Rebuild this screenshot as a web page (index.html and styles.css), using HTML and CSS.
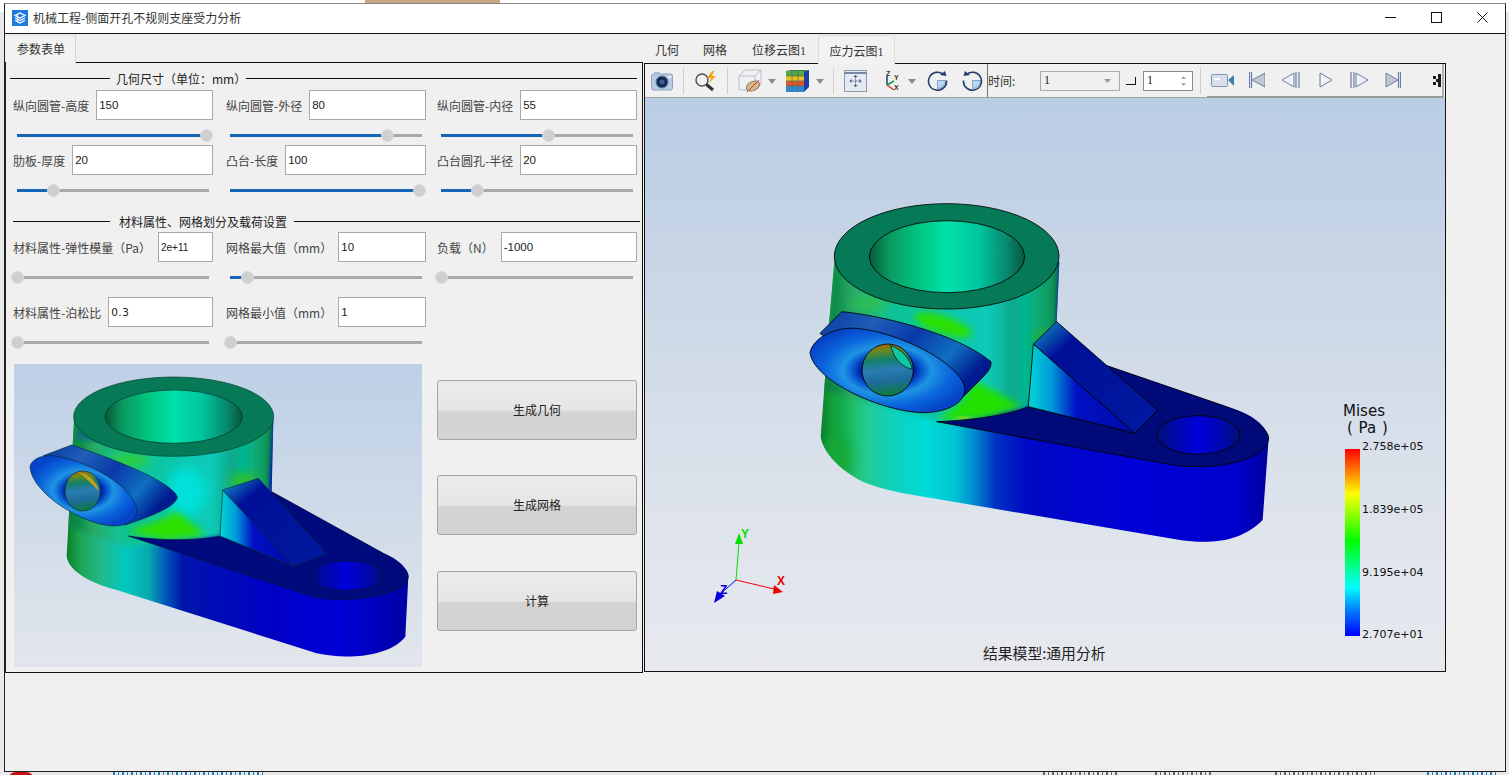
FILE: index.html
```html
<!DOCTYPE html>
<html lang="zh-CN">
<head>
<meta charset="utf-8">
<title>机械工程-侧面开孔不规则支座受力分析</title>
<link rel="stylesheet" href="styles.css">
</head>
<body>
<div class="behind">
  <span class="bg-tan"></span>
  <span class="bg-red"></span>
  <span class="bg-frag f1"></span>
  <span class="bg-frag f2"></span>
  <span class="bg-frag f3"></span>
  <span class="bg-frag f4"></span>
  <span class="bg-frag f5"></span>
</div>

<svg class="defs" width="0" height="0" aria-hidden="true">
  <defs>
    <linearGradient id="frontBig">
      <stop offset="0" stop-color="#0b7f2e"/><stop offset=".02" stop-color="#129a36"/><stop offset=".05" stop-color="#14ad4c"/>
      <stop offset=".075" stop-color="#1fbf6d"/><stop offset=".105" stop-color="#23cb95"/><stop offset=".16" stop-color="#10d0bb"/>
      <stop offset=".235" stop-color="#00dbd8"/><stop offset=".3" stop-color="#00c4d2"/><stop offset=".345" stop-color="#0086d0"/>
      <stop offset=".39" stop-color="#0032c2"/><stop offset=".46" stop-color="#0008c4"/><stop offset=".7" stop-color="#0000d6"/>
      <stop offset=".93" stop-color="#0000cc"/><stop offset="1" stop-color="#00009c"/>
    </linearGradient>
    <linearGradient id="frontSmall">
      <stop offset="0" stop-color="#0a7f25"/><stop offset=".04" stop-color="#1ca556"/><stop offset=".1" stop-color="#22b88a"/>
      <stop offset=".17" stop-color="#02c8c0"/><stop offset=".24" stop-color="#08a8b0"/><stop offset=".29" stop-color="#0058b8"/>
      <stop offset=".34" stop-color="#0014ac"/><stop offset=".6" stop-color="#0000c4"/><stop offset=".8" stop-color="#0000d8"/>
      <stop offset="1" stop-color="#0000a4"/>
    </linearGradient>
    <linearGradient id="upperBody">
      <stop offset="0" stop-color="#0a7a42"/><stop offset=".06" stop-color="#0f8f4c"/><stop offset=".12" stop-color="#2aa864"/><stop offset=".24" stop-color="#12c090"/>
      <stop offset=".48" stop-color="#0cc6a8"/><stop offset=".7" stop-color="#0ccab8"/><stop offset=".8" stop-color="#0aa88c"/><stop offset=".86" stop-color="#04b890"/>
      <stop offset=".96" stop-color="#0f9a5c"/><stop offset="1" stop-color="#0a7a42"/>
    </linearGradient>
    <linearGradient id="holeTop">
      <stop offset="0" stop-color="#07583c"/><stop offset=".13" stop-color="#0a9a60"/><stop offset=".33" stop-color="#00c884"/>
      <stop offset=".5" stop-color="#00e0aa"/><stop offset=".7" stop-color="#00c8a0"/><stop offset=".88" stop-color="#088a70"/>
      <stop offset="1" stop-color="#06583f"/>
    </linearGradient>
    <linearGradient id="ribSide">
      <stop offset="0" stop-color="#00d8d4"/><stop offset=".22" stop-color="#0098d8"/><stop offset=".45" stop-color="#0010c4"/>
      <stop offset="1" stop-color="#000aa8"/>
    </linearGradient>
    <linearGradient id="ribSlope" x1="0" y1="0" x2="1" y2="1">
      <stop offset="0" stop-color="#08c8cc"/><stop offset=".1" stop-color="#0a64b4"/><stop offset=".24" stop-color="#000f98"/>
      <stop offset="1" stop-color="#001aa0"/>
    </linearGradient>
    <linearGradient id="armHole">
      <stop offset="0" stop-color="#00106e"/><stop offset=".2" stop-color="#0008a8"/><stop offset=".5" stop-color="#0000da"/>
      <stop offset=".82" stop-color="#0008a8"/><stop offset="1" stop-color="#00106e"/>
    </linearGradient>
    <linearGradient id="bossSide" x1="0" y1="0" x2="1" y2=".5">
      <stop offset="0" stop-color="#063a9e"/><stop offset=".3" stop-color="#1f5eb8"/><stop offset=".55" stop-color="#0a3aa8"/>
      <stop offset=".8" stop-color="#0f6fc0"/><stop offset="1" stop-color="#001a90"/>
    </linearGradient>
    <radialGradient id="bossFace" cx=".5" cy=".5" r=".55">
      <stop offset=".3" stop-color="#00189c"/><stop offset=".42" stop-color="#0a62d4"/><stop offset=".52" stop-color="#1f94e4"/>
      <stop offset=".74" stop-color="#0a66dc"/><stop offset="1" stop-color="#0544c8"/>
    </radialGradient>
    <linearGradient id="boreHole" x1=".4" y1="0" x2=".5" y2="1">
      <stop offset="0" stop-color="#a8600f"/><stop offset=".12" stop-color="#6b8a1c"/><stop offset=".3" stop-color="#14806c"/>
      <stop offset=".5" stop-color="#2a7cb2"/><stop offset=".72" stop-color="#1e6c9c"/><stop offset="1" stop-color="#0c7c3a"/>
    </linearGradient>
    <filter id="soft" x="-40%" y="-40%" width="180%" height="180%"><feGaussianBlur stdDeviation="16"/></filter>
    <filter id="mid" x="-40%" y="-40%" width="180%" height="180%"><feGaussianBlur stdDeviation="11"/></filter>
    <filter id="softer" x="-40%" y="-40%" width="180%" height="180%"><feGaussianBlur stdDeviation="7"/></filter>
    <clipPath id="bigBody"><path d="M163 215L148 390L122 740C130 790 190 850 260 880C300 895 340 905 400 915L1200 1050C1280 1062 1380 1060 1448 990L1466 745C1460 700 1400 665 1340 650L975 525L830 395L838 215Z"/></clipPath>
    <clipPath id="smallBody"><path d="M222 180L200 590C210 640 280 670 350 690L950 880C1040 900 1170 890 1216 830L1225 650C1225 620 1180 590 1150 580L815 395L820 180Z"/></clipPath>
  </defs>
</svg>

<main class="window">
  <header class="titlebar">
    <svg class="app-icon" viewBox="0 0 16 16"><rect width="16" height="16" fill="#1f7ae0"/><path d="M3 5.500 8 3l5 2.500L8 8zM3 8l5 2.500L13 8M3 10.500 8 13l5-2.500" fill="none" stroke="#fff" stroke-width="1.300"/><path d="M5.500 4.500v7" stroke="#fff" stroke-width="1.200"/></svg>
    <span class="title">机械工程-侧面开孔不规则支座受力分析</span>
    <div class="win-controls">
      <svg class="win-btn" viewBox="0 0 11 11"><path d="M0 5.500h11" stroke="#111"/></svg>
      <svg class="win-btn max" viewBox="0 0 11 11"><rect x=".5" y=".5" width="10" height="10" fill="none" stroke="#111"/></svg>
      <svg class="win-btn close" viewBox="0 0 11 11"><path d="M.5.500l10 10M10.500.500l-10 10" stroke="#111" fill="none"/></svg>
    </div>
  </header>

  <div class="client">
    <section class="left">
      <div class="left-tabs"><span class="left-tab">参数表单</span></div>
      <div class="form-panel">
        <div class="heading h1"><i class="rule r1"></i><span>几何尺寸（单位：mm）</span><i class="rule grow"></i></div>
        <div class="grid g1">
          <div class="cell"><div class="field"><label>纵向圆管-高度</label><input value="150"></div><div class="slider"><b style="width:98.500%"></b><u style="left:98.500%"></u></div></div>
          <div class="cell"><div class="field"><label>纵向圆管-外径</label><input value="80"></div><div class="slider"><b style="width:82%"></b><u style="left:82%"></u></div></div>
          <div class="cell"><div class="field"><label>纵向圆管-内径</label><input value="55"></div><div class="slider"><b style="width:56%"></b><u style="left:56%"></u></div></div>
          <div class="cell"><div class="field"><label>肋板-厚度</label><input value="20"></div><div class="slider"><b style="width:19%"></b><u style="left:19%"></u></div></div>
          <div class="cell"><div class="field"><label>凸台-长度</label><input value="100"></div><div class="slider"><b style="width:98.500%"></b><u style="left:98.500%"></u></div></div>
          <div class="cell"><div class="field"><label>凸台圆孔-半径</label><input value="20"></div><div class="slider"><b style="width:19%"></b><u style="left:19%"></u></div></div>
        </div>
        <div class="heading h2"><i class="rule r2"></i><span>材料属性、网格划分及载荷设置</span><i class="rule grow"></i></div>
        <div class="grid g2">
          <div class="cell"><div class="field"><label>材料属性-弹性模量（Pa）</label><input class="narrow" value="2e+11"></div><div class="slider"><u style="left:.5%"></u></div></div>
          <div class="cell"><div class="field tight"><label>网格最大值（mm）</label><input value="10"></div><div class="slider"><b style="width:9%"></b><u style="left:9%"></u></div></div>
          <div class="cell"><div class="field"><label>负载（N）</label><input value="-1000"></div><div class="slider"><u style="left:.5%"></u></div></div>
          <div class="cell"><div class="field"><label>材料属性-泊松比</label><input class="mono" value="0.3"></div><div class="slider"><u style="left:.5%"></u></div></div>
          <div class="cell"><div class="field tight"><label>网格最小值（mm）</label><input value="1"></div><div class="slider"><u style="left:.5%"></u></div></div>
        </div>
        <div class="bottom">
          <div class="preview">
            <svg class="model-small" viewBox="0 0 1224 909">
              <g transform="translate(-42 -12)">
                <path d="M222 180L200 590C210 640 280 670 350 690L950 880C1040 900 1170 890 1216 830L1225 650C1225 620 1180 590 1150 580L815 395L820 180Z" fill="url(#frontSmall)"/>
                <g clip-path="url(#smallBody)">
                  <path d="M222 180L205 500L380 560L660 530L808 400L820 180Z" fill="url(#upperBody)" filter="url(#softer)"/>
                  <ellipse cx="560" cy="395" rx="60" ry="75" fill="#00e0d8" filter="url(#soft)"/>
                  <path d="M380 515L480 480L530 455L620 525L500 540Z" fill="#2ee000" filter="url(#mid)"/>
                  <ellipse cx="390" cy="300" rx="60" ry="20" fill="#30d030" filter="url(#soft)"/>
                  <ellipse cx="730" cy="365" rx="45" ry="24" fill="#30c020" filter="url(#soft)"/>
                  <ellipse cx="280" cy="225" rx="55" ry="18" fill="#0b6f80" filter="url(#softer)"/>
                </g>
                <path d="M815 395L1150 580C1200 610 1225 630 1225 650C1220 700 1090 720 1010 718C980 718 960 715 940 710L385 528C500 545 600 540 660 528L880 618L980 582Z" fill="#000a7c" stroke="#031436" stroke-width="2"/>
                <path d="M668 390L660 528L880 618Z" fill="url(#ribSide)" stroke="#063040" stroke-width="2"/>
                <path d="M668 390L775 355L980 582L880 618Z" fill="url(#ribSlope)" stroke="#06254a" stroke-width="2"/>
                <ellipse cx="1040" cy="647" rx="112" ry="44" fill="url(#armHole)" stroke="#001040" stroke-width="2"/>
                <path d="M130 287L215 255C320 290 510 360 532 410C530 440 450 470 375 495L200 400Z" fill="url(#bossSide)" stroke="#052a40" stroke-width="2"/>
                <path d="M90 320C95 295 130 283 165 288C260 300 400 380 410 445C415 480 380 498 340 498C250 495 95 400 90 320Z" fill="url(#bossFace)" stroke="#052a40" stroke-width="2"/>
                <ellipse cx="248" cy="393" rx="53" ry="60" fill="url(#boreHole)" stroke="#06302a" stroke-width="2"/>
                <path d="M232 336C262 340 290 362 296 392L248 345Z" fill="#c9a214"/>
                <ellipse cx="521" cy="170" rx="300" ry="119" fill="#067a56" stroke="#063a2c" stroke-width="2"/>
                <ellipse cx="521" cy="170" rx="206" ry="80" fill="url(#holeTop)" stroke="#052e22" stroke-width="2"/>
              </g>
            </svg>
          </div>
          <div class="actions">
            <button>生成几何</button>
            <button>生成网格</button>
            <button>计算</button>
          </div>
        </div>
      </div>
    </section>

    <section class="right">
      <nav class="right-tabs">
        <span class="tab">几何</span>
        <span class="tab">网格</span>
        <span class="tab">位移云图1</span>
        <span class="tab active">应力云图1</span>
      </nav>
      <div class="viewer">
        <div class="toolbars">
          <div class="toolbar-a">
            <svg class="ic ml6" width="22" height="20" viewBox="0 0 22 20"><rect x=".5" y="3" width="21" height="16" rx="2" fill="#b9cbe4" stroke="#8ea3c4"/><rect x="3" y="1" width="6" height="3" fill="#a8bcd8"/><circle cx="11" cy="11" r="6" fill="#16294f" stroke="#5f7aa8"/><circle cx="11" cy="11" r="2.500" fill="#3b5f9e"/><rect x="17" y="5" width="3" height="2" fill="#eef3fa"/></svg>
            <i class="sep ml10"></i>
            <svg class="ic ml10" width="24" height="22" viewBox="0 0 24 22"><circle cx="8" cy="10" r="6" fill="#eef2f7" stroke="#555" stroke-width="1.500"/><path d="M12.500 14.500 19 20" stroke="#333" stroke-width="3"/><path d="M18 1l-5 7h4l-2 5 7-7h-4l2-5z" fill="#f3a51f"/></svg>
            <i class="sep ml9"></i>
            <svg class="ic ml10" width="24" height="24" viewBox="0 0 24 24"><path d="M1 7 7 1h16v14l-6 6H1z" fill="#eef0f3" stroke="#b9bfc7"/><path d="M1 7h16v14M17 7l6-6" fill="none" stroke="#b9bfc7"/><ellipse cx="15" cy="17" rx="7" ry="4.500" fill="#d5b68b" stroke="#8a7a6a" transform="rotate(-25 15 17)"/><path d="M9 23 21 11" stroke="#c2452d"/></svg>
            <svg class="ic ml6 dd" width="8" height="5" viewBox="0 0 8 5"><path d="M0 0h8L4 5z" fill="#8a8a8a"/></svg>
            <svg class="ic ml10" width="23" height="22" viewBox="0 0 23 22"><path d="M18 1l5-1v17l-5 5z" fill="#1c3fa0"/><path d="M0 1 5 0h18l-5 1z" fill="#3a7a40"/><rect y="1" width="18" height="5" fill="#4fa84a"/><rect y="6" width="18" height="5" fill="#e9c020"/><rect y="11" width="18" height="5" fill="#e2542c"/><rect y="16" width="18" height="6" fill="#2f8ad8"/><path d="M6 1v21M12 1v21M0 6h18M0 11h18M0 16h18" stroke="#5a6a50" stroke-width=".7"/></svg>
            <svg class="ic ml7 dd" width="8" height="5" viewBox="0 0 8 5"><path d="M0 0h8L4 5z" fill="#8a8a8a"/></svg>
            <i class="sep ml9"></i>
            <svg class="ic ml10" width="23" height="22" viewBox="0 0 23 22"><rect x=".5" y=".5" width="22" height="21" fill="#e5e9f1" stroke="#8c98ad"/><path d="M.5 3h22" stroke="#7888a5" stroke-width="2"/><path d="M11.500 7v8M7.500 11h8" stroke="#8a93a4"/><path d="M11.500 5l2 2h-4zM11.500 17l2-2h-4zM5.500 11l2-2v4zM17.500 11l-2-2v4z" fill="#2f4a78"/></svg>
            <svg class="ic ml14 triadic" width="19" height="22" viewBox="0 0 19 22"><path d="M6 15V6" stroke="#1c3f7a" stroke-width="1.500"/><path d="M6 15l7-4" stroke="#10985a" stroke-width="1.500"/><path d="M6 15l7 5" stroke="#d8342a" stroke-width="1.500"/><text x="5" y="6" class="axis">Z</text><text x="13" y="10" class="axis">Y</text><text x="13" y="20" class="axis">X</text></svg>
            <svg class="ic ml8 dd" width="8" height="5" viewBox="0 0 8 5"><path d="M0 0h8L4 5z" fill="#8a8a8a"/></svg>
            <svg class="ic ml11" width="21" height="21" viewBox="0 0 21 21"><path d="M10.500 10.500h8a8 8 0 0 1-8 8z" fill="#bcd6f2" stroke="#4a78a8" stroke-width=".6"/><path d="M16.500 4.500a9 9 0 1 0 3 6" fill="none" stroke="#223f6e" stroke-width="1.600"/><path d="M19.500 6 13 5l5-4z" fill="#223f6e"/></svg>
            <svg class="ic ml14" width="21" height="21" viewBox="0 0 21 21"><path d="M10.500 10.500h8a8 8 0 0 1-8 8z" fill="#bcd6f2" stroke="#4a78a8" stroke-width=".6"/><path d="M4.500 4.500a9 9 0 1 1-3 6" fill="none" stroke="#223f6e" stroke-width="1.600"/><path d="M1.500 6 8 5 3 1z" fill="#223f6e"/></svg>
            <i class="sep dark ml4"></i>
            <span class="time-label">时间:</span>
            <div class="combo"><span>1</span><svg width="7" height="4" viewBox="0 0 7 4"><path d="M0 0h7L3.500 4z" fill="#9a9a9a"/></svg></div>
            <i class="corner"></i>
            <div class="spin"><span>1</span><svg width="5" height="12" viewBox="0 0 5 12"><path d="M2.500 1 5 4H0zM2.500 11 0 8h5z" fill="#a8a8a8"/></svg></div>
            <i class="sep ml7"></i>
          </div>
          <div class="toolbar-b">
            <svg class="ic ml4" width="24" height="13" viewBox="0 0 24 13"><rect x=".5" y=".5" width="16" height="12" rx="1" fill="#d8dfea" stroke="#8095b5"/><rect x="3" y="4" width="6" height="2" fill="#fff"/><path d="M17 6l6-5v11z" fill="#3d7fb0"/></svg>
            <svg class="ic ml14" width="16" height="16" viewBox="0 0 16 16"><path d="M.5 0v16M2.500 0v16" stroke="#6a7fa5" stroke-width="1.200"/><path d="M16 1v14L3 8z" fill="#c0c7d2" stroke="#6a7fa5"/></svg>
            <svg class="ic ml16" width="19" height="16" viewBox="0 0 19 16"><path d="M13 1v14L1 8z" fill="#eef1f6" stroke="#6a7fa5"/><path d="M15 0v16M18 0v16" stroke="#6a7fa5" stroke-width="1.200"/></svg>
            <svg class="ic ml19" width="14" height="16" viewBox="0 0 14 16"><path d="M1 1v14l12-7z" fill="#eef1f6" stroke="#6a7fa5"/></svg>
            <svg class="ic ml17" width="18" height="16" viewBox="0 0 18 16"><path d="M1 0v16M4 0v16" stroke="#6a7fa5" stroke-width="1.200"/><path d="M6 1v14l12-7z" fill="#eef1f6" stroke="#6a7fa5"/></svg>
            <svg class="ic ml17" width="16" height="16" viewBox="0 0 16 16"><path d="M1 1v14l12-7z" fill="#c0c7d2" stroke="#6a7fa5"/><path d="M13.500 0v16M15.500 0v16" stroke="#6a7fa5" stroke-width="1.200"/></svg>
            <svg class="ic handle" width="8" height="13" viewBox="0 0 8 13"><path d="M0 2h3v3H0zM0 8h3v3H0zM3 5h2v3H3zM5 0h3v13H5z" fill="#1a1a1a"/></svg>
          </div>
        </div>
        <div class="canvas">
          <svg class="model-big" viewBox="0 0 1500 1110">
            <path d="M163 215L148 390L122 740C130 790 190 850 260 880C300 895 340 905 400 915L1200 1050C1280 1062 1380 1060 1448 990L1466 745C1460 700 1400 665 1340 650L975 525L830 395L838 215Z" fill="url(#frontBig)"/>
            <g clip-path="url(#bigBody)">
              <path d="M163 215L148 400L130 600L460 690L745 655L830 400L838 215Z" fill="url(#upperBody)" filter="url(#softer)"/>
              <ellipse cx="490" cy="405" rx="90" ry="26" fill="#2ae000" filter="url(#mid)" transform="rotate(18 490 405)"/>
              <path d="M470 692L540 640L585 575L640 600L725 650L620 684Z" fill="#22e000" filter="url(#mid)"/>
              <ellipse cx="550" cy="686" rx="30" ry="4" fill="#d8e000" filter="url(#softer)"/>
              <ellipse cx="270" cy="340" rx="50" ry="26" fill="#2fc050" filter="url(#soft)"/>
              <ellipse cx="790" cy="445" rx="30" ry="24" fill="#22b030" filter="url(#soft)"/>
              <ellipse cx="350" cy="290" rx="60" ry="20" fill="#0b7088" filter="url(#soft)"/>
              <ellipse cx="170" cy="800" rx="40" ry="60" fill="#18a838" filter="url(#soft)"/>
            </g>
            <path d="M975 525L1340 650C1420 680 1466 720 1466 745C1460 790 1380 830 1250 830C1220 830 1200 828 1180 825L470 695C600 690 700 670 745 650L1065 730L1133 660Z" fill="#000a78" stroke="#000" stroke-width="2.500"/>
            <path d="M760 462L745 650L1065 730Z" fill="url(#ribSide)" stroke="#000" stroke-width="2.500"/>
            <path d="M760 462L830 395L1133 660L1065 730Z" fill="url(#ribSlope)" stroke="#000" stroke-width="2.500"/>
            <ellipse cx="1255" cy="735" rx="125" ry="58" fill="url(#armHole)" stroke="#000" stroke-width="2.500"/>
            <path d="M120 430L185 365C300 375 530 430 633 515C635 540 620 550 540 630L300 560Z" fill="url(#bossSide)" stroke="#000" stroke-width="2.500"/>
            <path d="M90 488C100 440 170 410 230 415C350 425 550 520 555 600C550 650 480 668 430 668C300 665 100 570 90 488Z" fill="url(#bossFace)" stroke="#000" stroke-width="2.500"/>
            <ellipse cx="323" cy="540" rx="77" ry="78" fill="url(#boreHole)" stroke="#000" stroke-width="2.500"/>
            <path d="M332 467C365 478 390 505 397 538C360 530 340 500 332 467Z" fill="#10c8a0" stroke="#000" stroke-width="2"/>
            <ellipse cx="500" cy="199" rx="337" ry="158" fill="#067a56" stroke="#000" stroke-width="2.500"/>
            <ellipse cx="501" cy="200" rx="233" ry="108" fill="url(#holeTop)" stroke="#000" stroke-width="2.500"/>
          </svg>

          <svg class="triad" viewBox="0 0 120 100">
            <path d="M46 70 49 32" stroke="#00e000" stroke-width="1"/>
            <path d="M49 23 45 34H53z" fill="#00e000"/>
            <path d="M46 70 84 79" stroke="#f00000" stroke-width="1"/>
            <path d="M93 82 84 75 83 84z" fill="#f00000"/>
            <path d="M46 70 28 86" stroke="#0000e0" stroke-width="1"/>
            <path d="M24 93 35 86 27 81z" fill="#0000e0"/>
            <text x="51" y="28" class="ty">Y</text>
            <text x="87" y="75" class="tx">X</text>
            <text x="30" y="84" class="tz">Z</text>
          </svg>

          <div class="legend">
            <div class="legend-title">Mises<span class="unit">( Pa )</span></div>
            <div class="legend-bar"></div>
            <span class="tick k1">2.758e+05</span>
            <span class="tick k2">1.839e+05</span>
            <span class="tick k3">9.195e+04</span>
            <span class="tick k4">2.707e+01</span>
          </div>
          <div class="caption">结果模型:通用分析</div>
        </div>
      </div>
    </section>
  </div>
</main>
</body>
</html>
```
FILE: styles.css
```css
* { box-sizing: border-box; }
html, body { margin: 0; padding: 0; }
body {
  width: 1509px;
  height: 775px;
  overflow: hidden;
  position: relative;
  background: #ececec;
  font-family: "Noto Sans CJK SC", "Liberation Sans", sans-serif;
  font-size: 12px;
  color: #222;
}
.defs { position: absolute; }

/* what shows around the edges of the window */
.behind { position: absolute; inset: 0; background: linear-gradient(#fff 0 12px, #e9e9e9 12px); overflow: hidden; }
.bg-tan { position: absolute; left: 365px; top: 0; width: 135px; height: 3px; background: #c6a584; }
.bg-red { position: absolute; left: 8px; top: 772px; width: 26px; height: 8px; background: #c8100c; border-radius: 13px 13px 0 0; }
.bg-frag { position: absolute; top: 772px; height: 3px; background: repeating-linear-gradient(90deg, #666 0 2px, transparent 2px 5px, #666 5px 6px, transparent 6px 9px); }
.f1 { left: 113px; width: 152px; background: repeating-linear-gradient(90deg, #1f7fb8 0 2px, transparent 2px 5px, #1f7fb8 5px 6px, transparent 6px 9px); }
.f2 { left: 1043px; width: 74px; }
.f3 { left: 1155px; width: 58px; }
.f4 { left: 1275px; width: 100px; }
.f5 { left: 1427px; width: 70px; background: repeating-linear-gradient(90deg, #1f7fb8 0 2px, transparent 2px 5px, #1f7fb8 5px 6px, transparent 6px 9px); }

/* window */
.window {
  position: relative;
  margin: 3px 0 0 4px;
  width: 1502px;
  height: 769px;
  border: 1px solid #222;
  border-top-color: #8a8a8a;
  background: #f0f0f0;
  display: flex;
  flex-direction: column;
}
.titlebar {
  height: 30px;
  flex: none;
  background: #fff;
  border-bottom: 1px solid #111;
  display: flex;
  align-items: center;
  padding-left: 7px;
}
.app-icon { width: 16px; height: 16px; margin-top: -1px; }
.title { margin-left: 5px; font-size: 12px; color: #333; margin-top: -3px; }
.win-controls { margin-left: auto; display: flex; align-items: center; padding-right: 17px; }
.win-btn { width: 11px; height: 11px; margin-left: 35px; margin-top: -2px; }

.client { flex: 1; display: flex; align-items: flex-start; }

/* left */
.left { width: 638px; flex: none; }
.left-tabs { height: 29px; display: flex; }
.left-tab {
  width: 70px;
  height: 29px;
  margin-left: 1px;
  margin-top: 1px;
  display: flex;
  align-items: center;
  padding: 0 0 3px 11px;
  border-right: 1px solid #d5d5d5;
  border-top: 1px solid #e2e2e2;
  background: #f2f2f2;
  position: relative;
  z-index: 1;
  color: #333;
}
.form-panel {
  height: 611px;
  border-top: 1px solid #111;
  border-right: 1px solid #111;
  border-bottom: 1px solid #111;
  margin-top: -1px;
  border-left: 1px solid #222;
}
.heading { display: flex; align-items: center; height: 16px; color: #222; }
.heading span { flex: none; padding: 0 6px; }
.rule { display: block; height: 1px; background: #111; }
.rule.grow { flex: 1; }
.h1 { margin: 7px 5px 4px 4px; }
.h1 span { padding-right: 0; }
.r1 { width: 100px; }
.h2 { margin: 21px 2px 3px 7px; }
.r2 { width: 97px; }
.h2 span { padding: 0 7px 0 9px; }

.grid { display: grid; grid-template-columns: 213px 211px 200px; margin-left: 7px; }
.g1 { row-gap: 8px; }
.g2 { row-gap: 18px; }
.cell { width: 200px; }
.field { display: flex; align-items: center; height: 30px; gap: 7px; }
.field.tight { gap: 6px; }
.field label { flex: none; color: #444; white-space: nowrap; }
.field input {
  flex: 1;
  min-width: 0;
  height: 30px;
  border: 1px solid #a9a9a9;
  background: #fff;
  padding: 0 2px;
  margin: 0;
  font-family: "Liberation Sans", sans-serif;
  font-size: 11.500px;
  color: #222;
  border-radius: 0;
  outline: none;
}
.field input.mono { font-family: "DejaVu Sans", sans-serif; font-size: 10.500px; letter-spacing: .5px; }
.field input.narrow { font-size: 10px; }
.slider { position: relative; height: 3px; margin: 14px 4px 0 4px; width: 192px; background: #a9a9a9; }
.slider b { position: absolute; left: 0; top: 0; height: 3px; background: #1565b8; }
.slider u {
  position: absolute;
  top: 50%;
  width: 11px;
  height: 11px;
  margin: -5.500px 0 0 -5.500px;
  border-radius: 50%;
  background: #cfcfcf;
  box-shadow: 0 0 0 1px #d8d8d8;
}

.bottom { display: flex; margin: 20px 0 0 8px; }
.preview {
  width: 408px;
  height: 303px;
  flex: none;
  background: linear-gradient(#bdd0e6, #e2e6ec);
}
.model-small { display: block; width: 408px; height: 303px; }
.actions { margin: 16px 0 0 15px; width: 200px; display: flex; flex-direction: column; gap: 35px; }
.actions button {
  height: 60px;
  border: 1px solid #a5a5a5;
  border-radius: 3px;
  background: linear-gradient(#ebebeb 0, #e6e6e6 50%, #d3d3d3 53%, #d3d3d3 100%);
  font: 12px "Noto Sans CJK SC", sans-serif;
  color: #222;
  padding: 0 0 2px;
}
.actions button:last-child { margin-top: 1px; }

/* right */
.right { width: 802px; flex: none; margin-left: 1px; }
.right-tabs {
  height: 29px;
  display: flex;
  align-items: center;
  padding: 3px 0 0 11px;
  position: relative;
  font-family: "Liberation Serif", "Noto Sans CJK SC", sans-serif;
}
.tab { margin-right: 24px; color: #333; }
.tab:nth-child(3) { margin-left: 1px; margin-right: 25px; }
.tab.active {
  position: absolute;
  left: 174px;
  top: 1px;
  height: 29px;
  width: 77px;
  margin: 0;
  padding-top: 2px;
  background: #f2f2f2;
  border: 1px solid #dcdcdc;
  border-bottom: none;
  display: flex;
  align-items: center;
  justify-content: center;
  z-index: 1;
}
.viewer {
  height: 609px;
  border: 1px solid #111;
  display: flex;
  flex-direction: column;
}
.toolbars { height: 34px; flex: none; display: flex; background: #f0f0f0; }
.toolbar-a {
  width: 562px;
  flex: none;
  height: 34px;
  display: flex;
  align-items: center;
  border-bottom: 1px solid #a2a2a2;
}
.toolbar-b {
  width: 237px;
  flex: none;
  height: 34px;
  display: flex;
  align-items: center;
  border-bottom: 2px solid #9a9a9a;
  border-right: 2px solid #b0b0b0;
  position: relative;
}
.ic { flex: none; display: block; }
.sep { flex: none; display: block; width: 1px; height: 26px; background: #cfcfcf; }
.sep.dark { height: 33px; background: #707070; }
.ml4 { margin-left: 4px; }
.ml6 { margin-left: 6px; }
.ml7 { margin-left: 7px; }
.ml8 { margin-left: 8px; }
.ml9 { margin-left: 9px; }
.ml10 { margin-left: 10px; }
.ml11 { margin-left: 11px; }
.ml14 { margin-left: 14px; }
.ml16 { margin-left: 16px; }
.ml17 { margin-left: 17px; }
.ml19 { margin-left: 19px; }
.dd { margin-top: 2px; }
.axis { font: bold 7px "Liberation Sans", sans-serif; fill: #333; }
.time-label { width: 52px; color: #333; flex: none; }
.combo {
  width: 80px;
  height: 20px;
  border: 1px solid #a9a9a9;
  display: flex;
  align-items: center;
  justify-content: space-between;
  padding: 0 8px 0 3px;
  flex: none;
  font-family: "Liberation Serif", serif;
  color: #222;
}
.corner {
  display: block;
  width: 10px;
  height: 8px;
  margin-left: 6px;
  border-right: 1px solid #111;
  border-bottom: 1px solid #111;
  flex: none;
}
.spin {
  width: 50px;
  height: 20px;
  margin-left: 7px;
  border: 1px solid #8a8a8a;
  background: #fff;
  display: flex;
  align-items: center;
  justify-content: space-between;
  padding: 0 6px 0 3px;
  flex: none;
  font-family: "Liberation Serif", serif;
  color: #222;
}
.handle { margin-left: auto; margin-right: 1px; }

.canvas {
  flex: 1;
  position: relative;
  overflow: hidden;
  background: linear-gradient(#b9cde4 0, #c9d6e6 30%, #dfe4ec 75%, #e7e9ee 100%);
}
.model-big { position: absolute; left: 135px; top: 92px; width: 500px; height: 370px; }
.triad { position: absolute; left: 45px; top: 412px; width: 120px; height: 100px; }
.ty, .tx, .tz { font: bold 12px "Liberation Sans", sans-serif; }
.ty { fill: #00e000; }
.tx { fill: #f00000; }
.tz { fill: #0000e0; }
.legend { position: absolute; left: 698px; top: 305px; width: 90px; height: 240px; }
.legend-title { font: 15px/17px "DejaVu Sans", sans-serif; color: #111; white-space: nowrap; }
.unit { display: block; padding-left: 4px; word-spacing: 1px; }
.legend-bar {
  position: absolute;
  left: 2px;
  top: 46px;
  width: 15px;
  height: 187px;
  background: linear-gradient(#ff0000 0, #ff8000 12%, #ffff00 24%, #00ff00 49%, #00ffff 74%, #0080ff 86%, #0000ff 100%);
}
.tick { position: absolute; left: 19px; font: 11px/14px "DejaVu Sans", sans-serif; color: #111; white-space: nowrap; }
.k1 { top: 37px; }
.k2 { top: 100px; }
.k3 { top: 163px; }
.k4 { top: 225px; }
.caption { position: absolute; left: 338px; top: 544px; font-size: 14.800px; line-height: 22px; color: #222; white-space: nowrap; }
```
